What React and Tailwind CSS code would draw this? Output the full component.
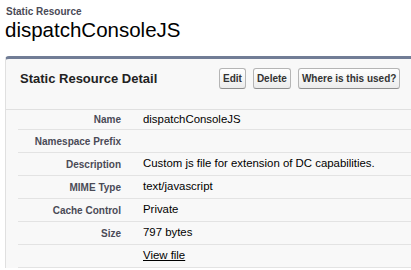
import React from 'react';

const rows = [
  { label: 'Name', value: 'dispatchConsoleJS' },
  { label: 'Namespace Prefix', value: '' },
  { label: 'Description', value: 'Custom js file for extension of DC capabilities.' },
  { label: 'MIME Type', value: 'text/javascript' },
  { label: 'Cache Control', value: 'Private' },
  { label: 'Size', value: '797 bytes' },
  { label: '', value: 'View file', link: true },
];

const Btn = ({ children }) => (
  <button className="h-[21px] px-[3px] rounded-[3px] border border-[#b5b5b5] border-b-[#8f8f8f] bg-gradient-to-b from-white to-[#ececec] text-[10px] font-bold leading-none text-[#333]">
    {children}
  </button>
);

const App = () => {
  return (
    <div className="w-[411px] h-[270px] overflow-hidden bg-white font-['Liberation_Sans',Arial,sans-serif]">
      {/* Page title */}
      <div className="pl-[6px] pt-[6px]">
        <div className="text-[10px] font-bold leading-[12px] text-[#4a4a56]">Static Resource</div>
        <h1 className="-ml-px text-[20.5px] leading-[23px] text-black">dispatchConsoleJS</h1>
      </div>

      {/* Detail panel */}
      <div className="ml-[5px] mt-[15px] w-[420px] border-t-[3px] border-t-[#717d96] border-l border-l-[#e0e0e0] rounded-tl-[4px] bg-[#f8f8f8]">
        <div className="flex h-[51px] pt-[9px] pl-[14px] border-b border-[#e0e0e0]">
          <div className="w-[199px] h-[21px] flex items-center text-[13px] font-bold text-[#222]">
            Static Resource Detail
          </div>
          <div className="flex gap-[7px] h-[21px]">
            <Btn>Edit</Btn>
            <Btn>Delete</Btn>
            <Btn>Where is this used?</Btn>
          </div>
        </div>

        <div className="pl-[12px]">
          {rows.map((r, i) => (
            <div
              key={i}
              className={`flex items-center border-b border-[#e3e3e3] ${i === 0 ? 'h-[20px]' : 'h-[23px]'}`}
            >
              <div className="w-[103px] text-right text-[10px] font-bold text-[#4a4a56]">{r.label}</div>
              <div className={`pl-[22px] text-[11.4px] text-black ${r.link ? 'underline' : ''}`}>{r.value}</div>
            </div>
          ))}
        </div>
      </div>
    </div>
  );
};

export default App;
